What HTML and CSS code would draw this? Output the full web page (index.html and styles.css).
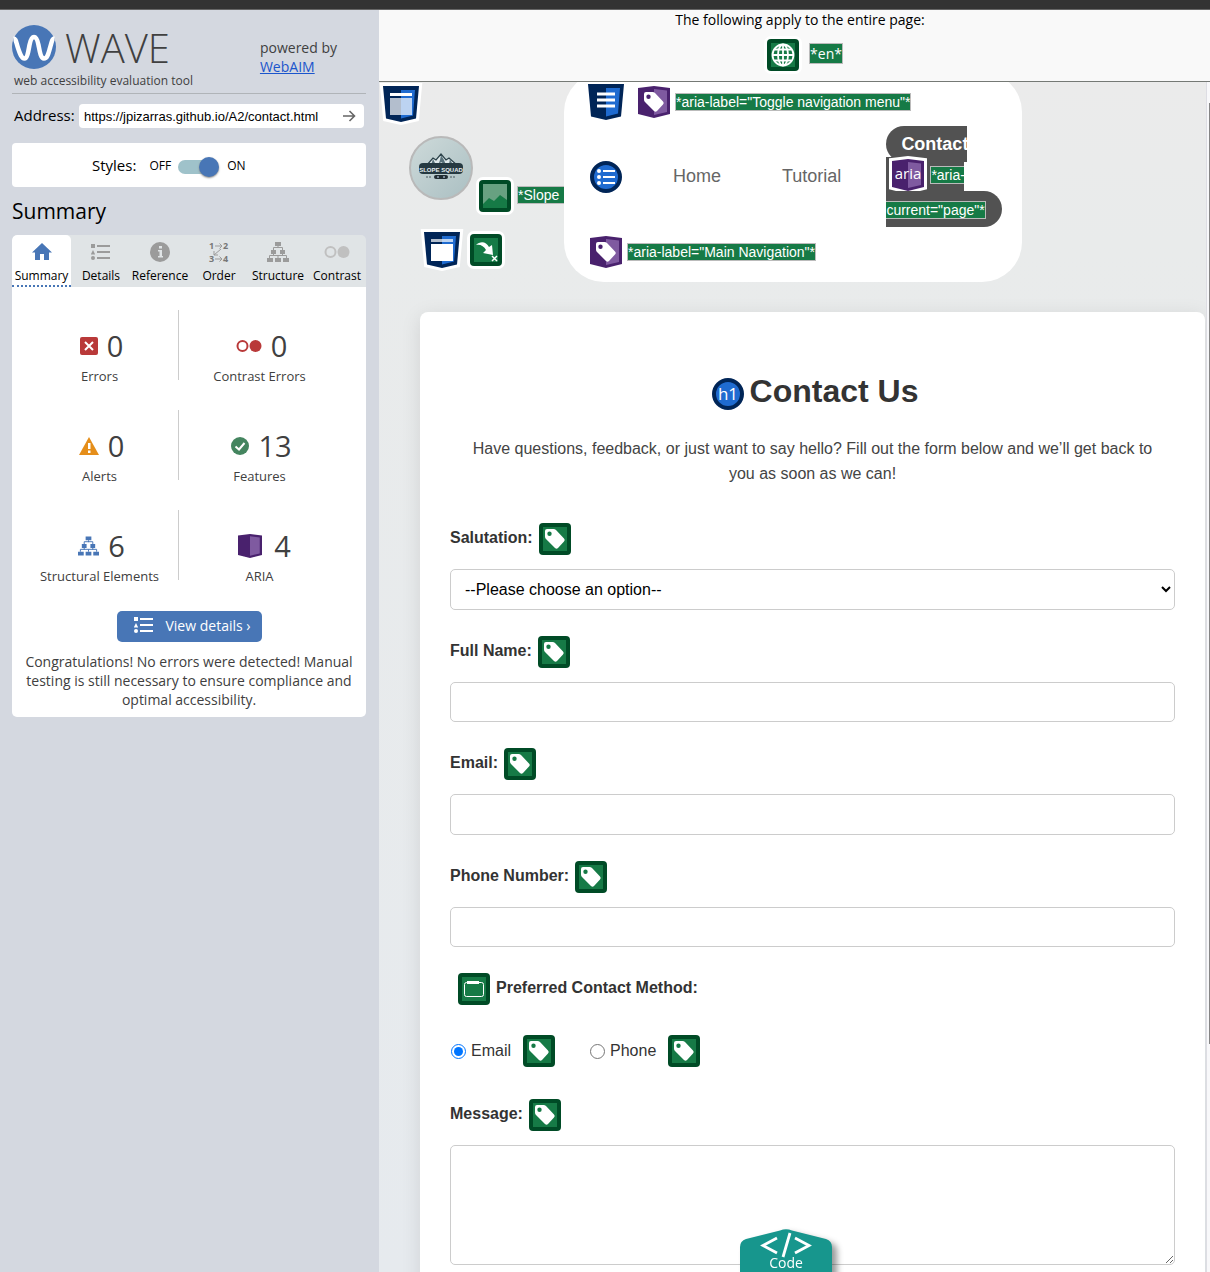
FILE: index.html
```html
<!DOCTYPE html>
<html lang="en">
<head>
<meta charset="utf-8">
<title>WAVE Report</title>
<link rel="stylesheet" href="styles.css">
</head>
<body>
<svg class="defs" aria-hidden="true">
  <symbol id="tag" viewBox="0 0 32 32"><path fill="#fff" fill-rule="evenodd" d="M6 8Q6 6 8 6H14.500Q16 6 17 7L25 15.500Q26.500 17 25 18.500L19 25Q17.500 26.500 16 25L7 16Q6 15 6 13.500ZM10.500 8.500A2.200 2.200 0 1 0 10.500 12.900A2.200 2.200 0 1 0 10.500 8.500Z"/></symbol>
  <symbol id="feature" viewBox="0 0 32 32"><rect width="32" height="32" rx="4" fill="#004b26"/><rect x="4" y="4" width="24" height="24" fill="#167a46"/></symbol>
  <symbol id="label" viewBox="0 0 32 32"><use href="#feature"/><use href="#tag"/></symbol>
  <symbol id="aria" viewBox="0 0 32 32"><path fill="#49216d" d="M0 2 16 0 32 2V28L16 32 0 28Z"/><path fill="#7f5aa0" d="M16 3 29 4.500V26L16 29Z"/></symbol>
  <symbol id="shield" viewBox="0 0 42 42"><path fill="#002557" d="M3 3H39L36 35.500 21 39 6 35.500Z"/><path fill="#1f6bd0" d="M21 7H35L33 32.500 21 35.500Z"/></symbol>
  <symbol id="tree" viewBox="0 0 22 20"><path fill="currentColor" d="M8 0h6v4H8zM4 8h5v4H4zM13 8h5v4h-5zM0 16h6v4H0zM8 16h6v4H8zM16 16h6v4h-6z"/><path fill="none" stroke="currentColor" d="M11 4v2M6.500 8V5.500h9V8M6.500 12v2M15.500 12v2M2.500 16v-2.500h17V16M11 13.500V16"/></symbol>
  <symbol id="list" viewBox="0 0 20 17"><path fill="currentColor" d="M0 0h4v4H0zM2 6 4.200 10.500H-.2zM6 1h13v2H6zM6 7h13v2H6zM6 13h13v2H6z"/><circle cx="2" cy="14" r="2" fill="currentColor"/></symbol>
</svg>
<div class="topbar"></div>
<div class="app">
  <aside class="sidebar">
    <header class="brand">
      <div>
        <div class="logo">
          <svg width="44" height="44" viewBox="0 0 44 44" aria-hidden="true"><circle cx="22" cy="22" r="22" fill="#4876b6"/><path d="M1.500 13.500C4 13.500 4 17 6 23S9.500 33.500 12.500 33.500 16.500 25 17.500 20 19.500 12 22 12 25.500 15 26.500 20 28.500 33.500 32 33.500 36.500 28 38 23 40 13.500 42.500 13.500" fill="none" stroke="#fff" stroke-width="4.500"/></svg>
          <span class="wordmark">WAVE</span>
        </div>
        <div class="tagline">web accessibility evaluation tool</div>
      </div>
      <div class="powered">powered by<br><a href="#">WebAIM</a></div>
    </header>
    <form class="address">
      <label for="url">Address:</label>
      <div class="urlbox"><input id="url" type="text" value="https://jpizarras.github.io/A2/contact.html"><button type="button" aria-label="Go"><svg width="14" height="12" viewBox="0 0 14 12"><path d="M1 6H12.500M7.500 1 12.500 6 7.500 11" fill="none" stroke="#666" stroke-width="1.600"/></svg></button></div>
    </form>
    <div class="styles"><label for="sw">Styles:</label><span class="off">OFF</span><input class="switch" id="sw" type="checkbox" checked><span>ON</span></div>
    <h2>Summary</h2>
    <nav class="tabs">
      <button class="tab active"><svg width="20" height="18" viewBox="0 0 20 18"><path fill="#4876b6" d="M10 0 20 9.500H17V17H12V11H8V17H3V9.500H0Z"/></svg>Summary</button>
      <button class="tab"><svg width="20" height="17"><use href="#list"/></svg>Details</button>
      <button class="tab"><svg width="20" height="20" viewBox="0 0 20 20"><circle cx="10" cy="10" r="10" fill="#9b9b9b"/><path fill="#e0e4e6" d="M9 4h3v2.500H9zM8 8h4v6h1v1.500H8V14h1.500V9.500H8z"/></svg>Reference</button>
      <button class="tab"><svg class="ordericon" width="20" height="20" viewBox="0 0 20 20"><text x="0" y="7">1</text><text x="14" y="7">2</text><text x="0" y="20">3</text><text x="14" y="20">4</text><path d="M6 4h7M10.500 1.500 13 4l-2.500 2.500M12 7 5 13M5 9v4h4M6 17h7M10.500 14.500 13 17l-2.500 2.500" fill="none" stroke="currentColor"/></svg>Order</button>
      <button class="tab"><svg width="22" height="20"><use href="#tree"/></svg>Structure</button>
      <button class="tab"><svg class="faded" width="26" height="14" viewBox="0 0 26 14"><circle cx="6.500" cy="7" r="5" fill="none" stroke="currentColor" stroke-width="2"/><circle cx="19.500" cy="7" r="6" fill="currentColor"/></svg>Contrast</button>
    </nav>
    <section class="panel">
      <div class="stats">
        <div class="stat"><div class="num"><svg width="18" height="18" viewBox="0 0 18 18"><rect width="18" height="18" rx="2" fill="#b93939"/><path d="M5 5l8 8M13 5l-8 8" stroke="#fff" stroke-width="2"/></svg>0</div>Errors</div>
        <div class="stat"><div class="num"><svg width="26" height="14" viewBox="0 0 26 14"><circle cx="6.500" cy="7" r="5" fill="none" stroke="#b93939" stroke-width="2"/><circle cx="19.500" cy="7" r="6" fill="#b93939"/></svg>0</div>Contrast Errors</div>
        <div class="stat"><div class="num"><svg width="20" height="18" viewBox="0 0 20 18"><path fill="#e58e1a" d="M10 0 20 18H0Z"/><path fill="#fff" d="M9 6h2.500v6H9zM9 13.500h2.500V16H9z"/></svg>0</div>Alerts</div>
        <div class="stat"><div class="num"><svg width="18" height="18" viewBox="0 0 18 18"><circle cx="9" cy="9" r="9" fill="#44855f"/><path d="M4.500 9.500 8 12.500 13.500 6" fill="none" stroke="#fff" stroke-width="2"/></svg>13</div>Features</div>
        <div class="stat"><div class="num blue"><svg width="21" height="20"><use href="#tree"/></svg><span>6</span></div>Structural Elements</div>
        <div class="stat"><div class="num wide"><svg width="24" height="24"><use href="#aria"/></svg>4</div>ARIA</div>
      </div>
      <button class="details"><svg width="20" height="17"><use href="#list"/></svg>View details ›</button>
      <p>Congratulations! No errors were detected! Manual testing is still necessary to ensure compliance and optimal accessibility.</p>
    </section>
  </aside>
  <main class="main">
    <div class="pagewide">
      <div>The following apply to the entire page:</div>
      <div class="lang"><svg class="icon ring" viewBox="0 0 32 32"><use href="#feature"/><g fill="none" stroke="#fff" stroke-width="1.800"><circle cx="16" cy="16" r="10.500"/><ellipse cx="16" cy="16" rx="5" ry="10.500"/><path d="M16 5.500v21M5.500 16h21M7.500 10.500h17M7.500 21.500h17"/></g></svg><span class="note">*en*</span></div>
    </div>
    <div class="pane">
      <div class="site">
        <header class="siteheader">
          <div class="left">
            <svg class="shield" viewBox="0 0 42 42"><path class="edge" d="M3 3H39L36 35.500 21 39 6 35.500Z"/><use href="#shield"/><path fill="#fff" d="M10 10h22v3H10z"/><path fill="#fff" opacity=".7" d="M10 15h22v17H10z"/></svg>
            <div class="squad">
              <svg class="photo" width="64" height="64" viewBox="0 0 64 64" role="img" aria-label="Slope Squad"><defs><linearGradient id="sky" x1="0" y1="0" x2="1" y2="1"><stop offset="0" stop-color="#cedada"/><stop offset="1" stop-color="#aabfc2"/></linearGradient></defs><circle cx="32" cy="32" r="31" fill="url(#sky)" stroke="#b9b9b9" stroke-width="2"/><path d="M17 30 24 22 27 24 32 18 37 24 40 22 49 30Z" fill="#dfe9ea" stroke="#2b4149" stroke-width="1.200"/><path d="M32 19 35 24 37 29 32 26 29 30 31 24ZM24 23 26 27 22 29ZM41 23 44 29 40 28Z" fill="#58717a"/><rect x="10" y="27" width="44" height="11" rx="4" fill="#263a42"/><text x="32" y="36" text-anchor="middle">SLOPE SQUAD</text><rect x="25" y="39" width="14" height="4" rx="2" fill="#222e33"/><path d="M17 41h6M41 41h6" stroke="#48595f" stroke-dasharray="2 1"/><circle cx="29" cy="41" r="1" fill="#9ab"/><circle cx="35" cy="41" r="1" fill="#9ab"/></svg>
              <svg class="icon ring" viewBox="0 0 32 32"><use href="#feature"/><path fill="#68a181" d="M4 4h24v16l-7-5-6 6-5-3-6 6z"/></svg>
              <span class="note">*Slope</span>
            </div>
            <div class="skip">
              <svg class="shield" viewBox="0 0 42 42"><path class="edge" d="M3 3H39L36 35.500 21 39 6 35.500Z"/><use href="#shield"/><path fill="#fff" opacity=".7" d="M10 10h22v3H10z"/><path fill="#fff" d="M10 15h22v17H10z"/></svg>
              <svg class="icon ring" viewBox="0 0 32 32"><use href="#feature"/><path fill="#fff" d="M6 11C10 7 16 7 19 13L22 11 23 21 13 19 16 16C14 12 10 10 6 11Z"/><path d="M22 22l5 5M27 22l-5 5" stroke="#fff" stroke-width="1.500"/></svg>
            </div>
          </div>
          <nav class="sitenav">
            <div class="navline first"><svg class="shield" viewBox="0 0 42 42"><use href="#shield"/><path d="M12 13h18M12 19h18M12 25h18" stroke="#fff" stroke-width="3"/></svg><svg class="icon" viewBox="0 0 32 32"><use href="#aria"/><use href="#tag"/></svg><span class="note">*aria-label="Toggle navigation menu"*</span></div>
            <div class="links">
              <svg class="icon" viewBox="0 0 32 32"><circle cx="16" cy="16" r="14" fill="#1f6bd0" stroke="#002557" stroke-width="4"/><path d="M13 10h12M13 16h12M13 22h12" stroke="#fff" stroke-width="2.200"/><g fill="#fff"><circle cx="9" cy="10" r="2"/><circle cx="9" cy="16" r="2"/><circle cx="9" cy="22" r="2"/></g></svg>
              <a class="home" href="#">Home</a><a class="tutorial" href="#">Tutorial</a>
              <a class="contact" href="#"><span class="cap">Contact</span><span class="mid"><svg class="icon" viewBox="0 0 32 32"><path class="edge" d="M0 2 16 0 32 2V28L16 32 0 28Z"/><use href="#aria"/><text class="glyph" x="16" y="20" text-anchor="middle">aria</text></svg><span class="note">*aria-</span></span><span class="end"><span class="note">current="page"*</span></span></a>
            </div>
            <div class="navline"><svg class="icon" viewBox="0 0 32 32"><use href="#aria"/><use href="#tag"/></svg><span class="note">*aria-label="Main Navigation"*</span></div>
          </nav>
        </header>
        <form class="card">
          <h1><svg class="icon" viewBox="0 0 32 32"><circle cx="16" cy="16" r="14" fill="#1f6bd0" stroke="#002557" stroke-width="4"/><text class="glyph h" x="16" y="22" text-anchor="middle">h1</text></svg>Contact Us</h1>
          <p>Have questions, feedback, or just want to say hello? Fill out the form below and we’ll get back to you as soon as we can!</p>
          <div class="row"><label for="sal">Salutation:</label><svg class="icon"><use href="#label"/></svg></div>
          <select id="sal"><option>--Please choose an option--</option></select>
          <div class="row"><label for="name">Full Name:</label><svg class="icon"><use href="#label"/></svg></div>
          <input class="field" id="name" type="text">
          <div class="row"><label for="mail">Email:</label><svg class="icon"><use href="#label"/></svg></div>
          <input class="field" id="mail" type="email">
          <div class="row"><label for="tel">Phone Number:</label><svg class="icon"><use href="#label"/></svg></div>
          <input class="field" id="tel" type="tel">
          <fieldset>
            <legend class="row"><svg class="icon" viewBox="0 0 32 32"><use href="#feature"/><rect x="6.500" y="9.500" width="19" height="14" rx="2" fill="none" stroke="#fff"/><path d="M9 9.500h12" stroke="#fff" stroke-width="3"/></svg><span>Preferred Contact Method:</span></legend>
            <div class="radios">
              <span class="choice"><input type="radio" name="how" id="r1" checked><label for="r1">Email</label><svg class="icon"><use href="#label"/></svg></span>
              <span class="choice"><input type="radio" name="how" id="r2"><label for="r2">Phone</label><svg class="icon"><use href="#label"/></svg></span>
            </div>
          </fieldset>
          <div class="row"><label for="msg">Message:</label><svg class="icon"><use href="#label"/></svg></div>
          <textarea id="msg"></textarea>
        </form>
      </div>
      <div class="scroll" aria-hidden="true"><div class="thumb"></div></div>
      <button class="code"><svg width="92" height="60" viewBox="0 0 92 60"><path d="M0 60V18Q0 12 6 10L40 1.500Q46-1 52 1.500L86 10Q92 12 92 18V60Z" fill="#17968d"/><path d="M37 9 23 16.500 37 24M55 9 69 16.500 55 24M50 4 43 28" fill="none" stroke="#fff" stroke-width="2.800"/></svg><span>Code</span></button>
    </div>
  </main>
</div>
</body>
</html>
```

FILE: styles.css
```css
* { box-sizing: border-box; }
body { margin: 0; height: 100vh; display: flex; flex-direction: column; overflow: hidden; font-family: "Open Sans", "Noto Sans", sans-serif; color: #000; }
button { font: inherit; border: 0; padding: 0; background: none; cursor: pointer; }
svg { flex: none; display: block; overflow: visible; }
.defs { position: absolute; width: 0; height: 0; }
.icon { width: 32px; height: 32px; }
.ring { border-radius: 4px; box-shadow: 0 0 0 3px #fff; }
.edge { fill: #fff; stroke: #fff; stroke-width: 6px; }
.glyph { font: 15px "Open Sans", sans-serif; fill: #fff; }
.glyph.h { font-size: 17px; }
.note { background: #167a46; color: #fff; border: 1px solid #bbb; font-size: 14px; line-height: 16px; white-space: nowrap; }

.topbar { height: 10px; flex: none; background: #333; border-bottom: 1px solid #666; }
.app { flex: 1; min-height: 0; display: flex; }

/* Sidebar */
.sidebar { width: 379px; flex: none; background: #d4d8e0; padding: 15px 13px 0 12px; }
.brand { display: flex; justify-content: space-between; height: 69px; border-bottom: 1px solid #b0b4b8; color: #404040; }
.logo { display: flex; gap: 9px; align-items: center; height: 44px; }
.wordmark { font-size: 40px; line-height: 44px; font-weight: 300; padding-top: 2px; }
.tagline { font-size: 12px; line-height: 20px; padding: 2px 0 0 2px; }
.powered { font-size: 14px; line-height: 19px; padding: 13px 29px 0 0; }
.powered a { color: #1a55cc; }
.address { display: flex; align-items: center; justify-content: space-between; padding: 10px 2px 15px; font-size: 15px; }
.address label { line-height: 20px; padding-bottom: 2px; }
.urlbox { display: flex; width: 285px; height: 24px; background: #fff; border-radius: 4px; padding: 0 8px 0 5px; }
.urlbox input { flex: 1; min-width: 0; border: 0; padding: 0; background: none; font: 13px "Liberation Sans", Arial, sans-serif; color: #000; }
.urlbox button { display: flex; align-items: center; }
.styles { display: flex; align-items: center; height: 44px; padding-left: 80px; background: #fff; border-radius: 4px; font-size: 15px; }
.styles span { font-size: 12px; }
.styles .off { margin-left: 13px; }
.switch { appearance: none; width: 37px; height: 14px; margin: 3px 12px 0 7px; border-radius: 7px; background: #9fc2ca; display: flex; align-items: center; justify-content: flex-end; }
.switch::after { content: ""; width: 20px; height: 20px; margin-right: -4px; border-radius: 50%; background: #4876b6; box-shadow: 0 1px 2px #888; flex: none; }
h2 { margin: 9px 0 9px; font-size: 21px; line-height: 30px; font-weight: 400; }
.tabs { display: grid; grid-template-columns: repeat(6, 1fr); background: #e0e4e6; border-radius: 5px 5px 0 0; overflow: hidden; }
.tab { height: 52px; display: grid; grid-template-rows: 32px 16px; justify-items: center; justify-content: center; align-items: center; align-content: start; padding-left: 1px; font-size: 12px; color: #000; white-space: nowrap; }
.tab svg { color: #9b9b9b; margin-top: 2px; }
.tab .faded { color: #c0c0c0; }
.tab.active { padding-left: 0; background: #fff; border-bottom: 2px dotted #4876b6; border-radius: 5px 5px 0 0; }
.ordericon text { font: bold 9px "Open Sans", sans-serif; fill: #777; }
.panel { background: #fff; border-radius: 0 0 5px 5px; padding: 23px 8px 8px; color: #404040; }
.stats { display: grid; grid-template-columns: 159px 1fr; row-gap: 30px; padding-right: 18px; }
.stat { height: 70px; padding-top: 16px; text-align: center; font-size: 13px; line-height: 20px; }
.stat:nth-child(odd) { border-right: 1px solid #ccc; padding-left: 1px; }
.num { display: flex; align-items: center; justify-content: center; gap: 9px; height: 40px; font-size: 29px; padding-left: 4px; }
.num.blue svg { color: #4876b6; }
.num.wide { gap: 12px; padding-left: 10px; }
.details { display: flex; align-items: center; justify-content: space-between; width: 145px; height: 31px; margin: 31px auto 0; padding: 0 11px 2px 17px; border-radius: 5px; background: #4876b6; color: #fff; font-size: 14px; }
.panel p { margin: 10px 0 0; text-align: center; font-size: 14px; line-height: 19px; }

/* Evaluated page */
.main { flex: 1; min-width: 0; display: flex; flex-direction: column; }
.pagewide { height: 72px; flex: none; padding-left: 11px; background: #f9f9f9; border-bottom: 1px solid #757975; text-align: center; font-size: 14px; line-height: 20px; }
.lang { display: flex; justify-content: center; align-items: flex-start; gap: 10px; padding: 9px 0 0 10px; }
.lang .note { margin-top: 4px; line-height: 19px; }
.pane { flex: 1; min-height: 0; display: flex; overflow: hidden; position: relative; }
.site { flex: 1; min-width: 0; padding: 0 1px 0 0; background: linear-gradient(#ebebeb, #e9ebeb 160px, #e6eaee); font-family: "Liberation Sans", Arial, sans-serif; }
.scroll { width: 4px; background: #f8f8fa; border-left: 1px solid #dddde3; display: flex; justify-content: flex-end; padding: 21px 0; }
.thumb { width: 1px; height: 82%; background: #858585; }
.siteheader { display: flex; height: 200px; }
.left { width: 185px; flex: none; padding: 1px 0 0 1px; overflow: hidden; }
.shield { width: 42px; height: 42px; }
.squad { display: flex; gap: 6px; height: 76px; margin: 11px 0 0 29px; }
.squad .icon { align-self: flex-end; }
.squad .note { flex: 1; align-self: flex-end; margin-bottom: 8px; border-right: 0; }
.photo text { font: bold 6px "Liberation Sans", sans-serif; fill: #e8f0f0; }
.skip { display: flex; align-items: center; gap: 7px; margin: 17px 0 0 41px; }
.sitenav { width: 458px; height: 210px; margin-top: -10px; padding: 10px 0 0 26px; background: #fff; border-radius: 40px; }
.navline { display: flex; align-items: center; gap: 5px; }
.first { height: 40px; margin-left: -5px; }
.first .shield { margin-right: 6px; }
.links { display: flex; align-items: center; margin: 4px 0 9px; font-size: 18px; }
.links a { color: #666; text-decoration: none; }
.home { margin-left: 51px; }
.tutorial { margin-left: 61px; }
.contact { display: flex; flex-direction: column; align-items: flex-start; margin-left: 45px; }
.contact span { display: block; }
.contact .cap { height: 36px; padding: 8px 0 0 15px; width: 81px; line-height: 20px; font-weight: 700; color: #fff; background: #525252; border-radius: 18px 0 0 18px; white-space: nowrap; }
.contact .mid { display: flex; align-items: center; gap: 6px; height: 36px; width: 78px; margin-top: -5px; padding-left: 6px; background: #525252; }
.contact .mid .note { border-right: 0; width: 34px; }
.contact .end { height: 36px; margin-top: -2px; padding: 10px 16px 0 0; background: #525252; border-radius: 0 18px 18px 0; }
.contact .end .note { border-left: 0; }

.card { margin: 30px 0 0 41px; padding: 61px 30px 40px; background: #fff; border-radius: 8px; box-shadow: 0 4px 20px rgba(0,0,0,.1); color: #333; font-size: 16px; }
h1 { display: flex; justify-content: center; align-items: center; gap: 6px; margin: 0; padding-left: 5px; font-size: 32px; line-height: 36px; height: 36px; }
h1 svg { margin-top: 6px; }
.card p { margin: 27px 20px 37px; text-align: center; line-height: 25px; color: #444; }
.row { display: flex; align-items: center; gap: 6px; height: 32px; margin-bottom: 14px; padding: 0; font-weight: 700; }
.row label, .row span { padding-bottom: 3px; }
.card select, .field, .card textarea { display: block; width: 100%; height: 40px; margin: 0 0 26px; padding: 0 10px; border: 1px solid #ccc; border-radius: 5px; background: #fff; font: inherit; color: #000; }
.card select, .field[type="email"] { height: 41px; }
fieldset { border: 0; margin: 0; padding: 0; }
fieldset .row { padding-left: 8px; margin-bottom: 30px; }
.radios { display: flex; gap: 34px; margin-bottom: 32px; }
.choice { display: flex; align-items: center; }
.choice input { width: 15px; height: 15px; margin: 0 5px 0 1px; }
.choice label { margin-right: 12px; }
.card textarea { height: 120px; }
.code { position: absolute; left: 361px; bottom: -17px; width: 92px; height: 60px; color: #fff; filter: drop-shadow(5px 4px 3px rgba(0,0,0,.4)); }
.code span { position: absolute; left: 0; right: 0; top: 26px; font-size: 14px; line-height: 16px; }
```
